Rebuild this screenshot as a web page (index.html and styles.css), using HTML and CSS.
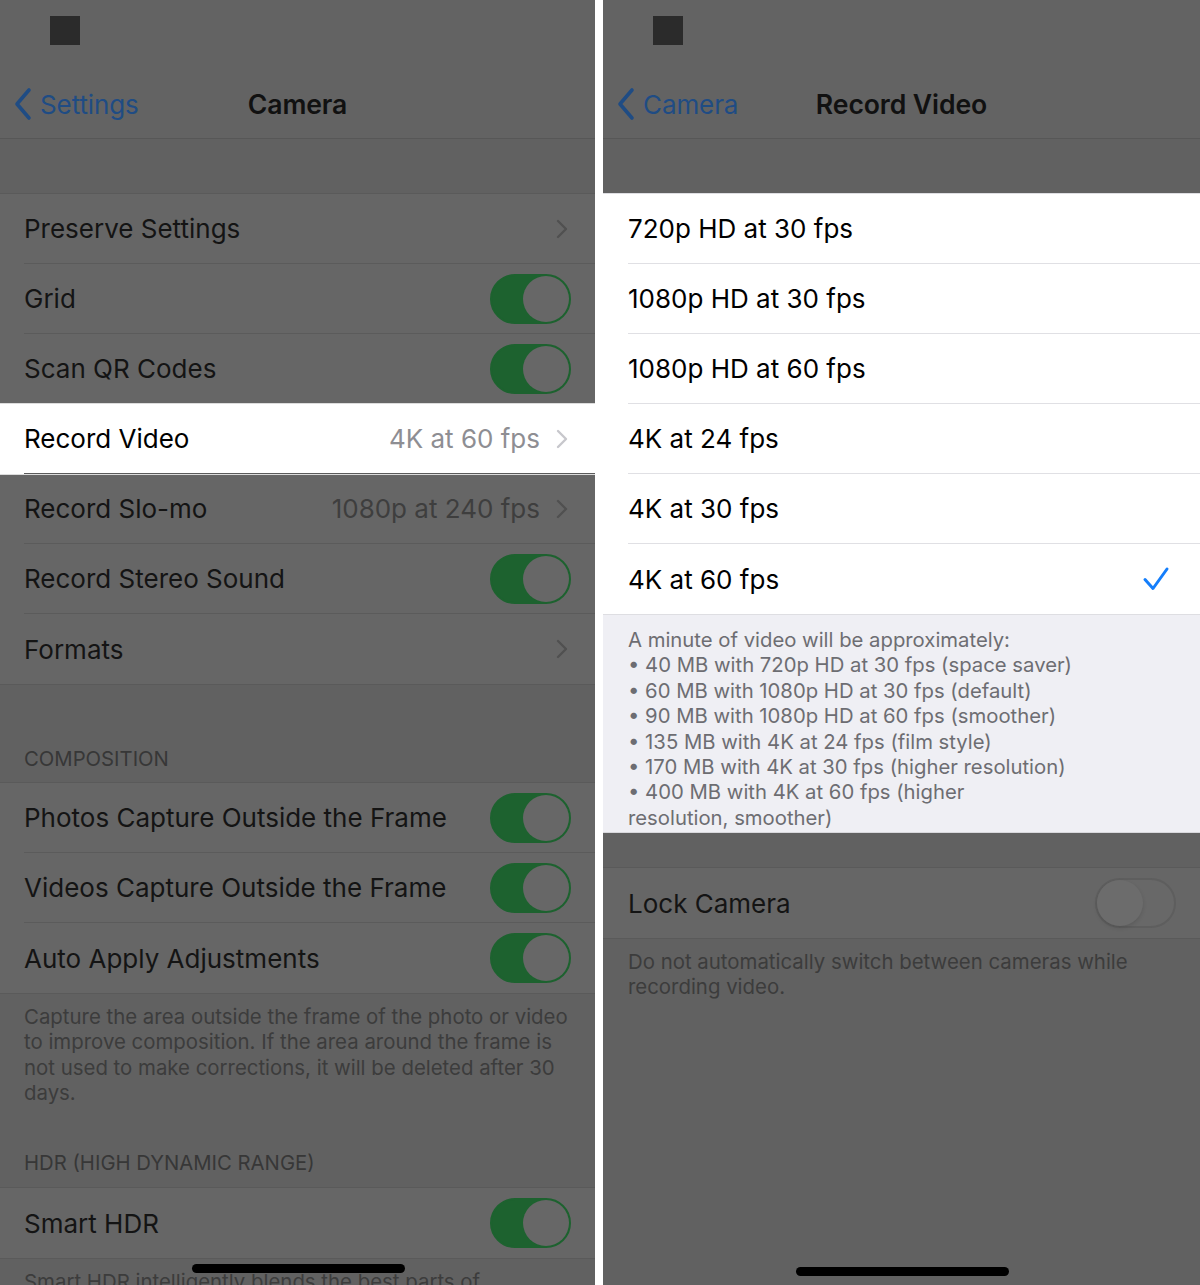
FILE: index.html
```html
<!DOCTYPE html>
<html lang="en">
<head>
  <meta charset="UTF-8">
  <meta name="viewport" content="width=device-width, initial-scale=1.0">
  <title>Camera - Record Video</title>
  <link rel="stylesheet" href="styles.css">
</head>
<body>

  <div class="screens">

    <!-- Camera settings, dimmed except the Record Video row -->
    <section class="screen">
      <div class="status-bar"><span class="status-square"></span></div>

      <div class="navbar">
        <a class="back" href="#">
          <svg class="back-icon" viewBox="0 0 20 34"><path d="M16 3L4 17l12 14"/></svg>
          Settings
        </a>
        <h1>Camera</h1>
      </div>

      <div class="spacer"></div>

      <ul class="group">
        <li class="row">
          <div class="row-inner">
            <span class="label">Preserve Settings</span>
            <svg class="chevron" viewBox="0 0 12 20"><path d="M2 2l8 8-8 8"/></svg>
          </div>
        </li>
        <li class="row">
          <div class="row-inner">
            <span class="label">Grid</span>
            <span class="toggle on"></span>
          </div>
        </li>
        <li class="row">
          <div class="row-inner">
            <span class="label">Scan QR Codes</span>
            <span class="toggle on"></span>
          </div>
        </li>
        <li class="row highlight">
          <div class="row-inner">
            <span class="label">Record Video</span>
            <span class="value">4K at 60 fps</span>
            <svg class="chevron" viewBox="0 0 12 20"><path d="M2 2l8 8-8 8"/></svg>
          </div>
        </li>
        <li class="row">
          <div class="row-inner">
            <span class="label">Record Slo-mo</span>
            <span class="value">1080p at 240 fps</span>
            <svg class="chevron" viewBox="0 0 12 20"><path d="M2 2l8 8-8 8"/></svg>
          </div>
        </li>
        <li class="row">
          <div class="row-inner">
            <span class="label">Record Stereo Sound</span>
            <span class="toggle on"></span>
          </div>
        </li>
        <li class="row">
          <div class="row-inner">
            <span class="label">Formats</span>
            <svg class="chevron" viewBox="0 0 12 20"><path d="M2 2l8 8-8 8"/></svg>
          </div>
        </li>
      </ul>

      <div class="section-header tall">COMPOSITION</div>

      <ul class="group">
        <li class="row">
          <div class="row-inner">
            <span class="label">Photos Capture Outside the Frame</span>
            <span class="toggle on"></span>
          </div>
        </li>
        <li class="row">
          <div class="row-inner">
            <span class="label">Videos Capture Outside the Frame</span>
            <span class="toggle on"></span>
          </div>
        </li>
        <li class="row">
          <div class="row-inner">
            <span class="label">Auto Apply Adjustments</span>
            <span class="toggle on"></span>
          </div>
        </li>
      </ul>

      <p class="footer">Capture the area outside the frame of the photo or video<br>to improve composition. If the area around the frame is<br>not used to make corrections, it will be deleted after 30<br>days.</p>

      <div class="section-header">HDR (HIGH DYNAMIC RANGE)</div>

      <ul class="group">
        <li class="row">
          <div class="row-inner">
            <span class="label">Smart HDR</span>
            <span class="toggle on"></span>
          </div>
        </li>
      </ul>

      <p class="footer">Smart HDR intelligently blends the best parts of</p>

      <span class="home-indicator"></span>
    </section>

    <!-- Record Video options, list and note highlighted -->
    <section class="screen">
      <div class="status-bar"><span class="status-square"></span></div>

      <div class="navbar">
        <a class="back" href="#">
          <svg class="back-icon" viewBox="0 0 20 34"><path d="M16 3L4 17l12 14"/></svg>
          Camera
        </a>
        <h1>Record Video</h1>
      </div>

      <div class="spacer"></div>

      <ul class="group light" id="formatList"></ul>

      <div class="light-footer">
        A minute of video will be approximately:<br>
        • 40 MB with 720p HD at 30 fps (space saver)<br>
        • 60 MB with 1080p HD at 30 fps (default)<br>
        • 90 MB with 1080p HD at 60 fps (smoother)<br>
        • 135 MB with 4K at 24 fps (film style)<br>
        • 170 MB with 4K at 30 fps (higher resolution)<br>
        • 400 MB with 4K at 60 fps (higher<br>
        resolution, smoother)
      </div>

      <div class="spacer short"></div>

      <ul class="group">
        <li class="row">
          <div class="row-inner">
            <span class="label">Lock Camera</span>
            <span class="toggle"></span>
          </div>
        </li>
      </ul>

      <p class="footer">Do not automatically switch between cameras while<br>recording video.</p>

      <span class="home-indicator"></span>
    </section>

  </div>

  <script>
    const formats = ['720p HD at 30 fps', '1080p HD at 30 fps', '1080p HD at 60 fps', '4K at 24 fps', '4K at 30 fps', '4K at 60 fps'];
    const selected = '4K at 60 fps';
    const formatList = document.getElementById('formatList');

    formats.forEach(name => {
      const item = document.createElement('li');
      item.classList.add('row');
      const check = name === selected
        ? '<svg class="check" viewBox="0 0 28 26"><path d="M3 13.5l8 9L25 3"/></svg>'
        : '';
      item.innerHTML = `<div class="row-inner"><span class="label">${name}</span>${check}</div>`;
      formatList.appendChild(item);
    });
  </script>
</body>
</html>
```

FILE: styles.css
```css
/* General Styles */
* {
  margin: 0;
  padding: 0;
  box-sizing: border-box;
}

body {
  font-family: 'Inter', 'Liberation Sans', sans-serif;
  background-color: #ffffff;
  color: #141414;
  width: 1200px;
  height: 1285px;
  overflow: hidden;
}

.screens {
  display: flex;
  gap: 8px;
  height: 1285px;
}

.screen {
  position: relative;
  flex: 0 0 595px;
  height: 100%;
  background-color: #616161;
  overflow: hidden;
}

.screen + .screen {
  flex-basis: 597px;
}

/* Status + navbar */
.status-bar {
  height: 70px;
  padding: 16px 0 0 50px;
  background-color: #636363;
}

.status-square {
  display: block;
  width: 30px;
  height: 29px;
  background-color: #2b2b2b;
}

.navbar {
  display: grid;
  grid-template-columns: 1fr auto 1fr;
  align-items: center;
  height: 69px;
  background-color: #636363;
  border-bottom: 1px solid #575757;
}

.back {
  display: flex;
  align-items: center;
  gap: 7px;
  padding-left: 13px;
  font-size: 26px;
  color: #1f4c84;
  text-decoration: none;
  letter-spacing: -0.1px;
}

.back-icon {
  width: 20px;
  height: 34px;
  fill: none;
  stroke: #1f4c84;
  stroke-width: 3.6;
  stroke-linecap: round;
  stroke-linejoin: round;
}

h1 {
  font-size: 26.6px;
  font-weight: 600;
  color: #111111;
  letter-spacing: -0.1px;
}

.spacer {
  height: 54px;
}

.spacer.short {
  height: 34px;
}

/* Grouped lists */
.group {
  list-style: none;
  background-color: #666666;
  border-top: 1px solid #5a5a5a;
  border-bottom: 1px solid #5a5a5a;
}

.row {
  height: 70px;
  padding-left: 24px;
}

.screen + .screen .row {
  padding-left: 25px;
}

.row-inner {
  display: flex;
  align-items: center;
  height: 100%;
  padding-right: 24px;
  border-bottom: 1px solid #5b5b5b;
}

.row:last-child .row-inner {
  border-bottom: none;
}

.label {
  flex: 1;
  font-size: 26px;
  color: #141414;
}

.value {
  font-size: 26px;
  color: #3e3e3e;
  margin-right: 16px;
}

.chevron {
  width: 12px;
  height: 20px;
  margin-right: 3px;
  fill: none;
  stroke: #505050;
  stroke-width: 2.4;
  stroke-linecap: round;
  stroke-linejoin: round;
}

.row.highlight {
  background-color: #ffffff;
  box-shadow: 0 -1px 0 #dcdcdc, 0 1px 0 #dcdcdc;
  position: relative;
}

.row.highlight .label {
  color: #000000;
}

.row.highlight .value {
  color: #8e8e93;
}

.row.highlight .chevron {
  stroke: #c7c7cc;
}

/* Toggles */
.toggle {
  position: relative;
  width: 81px;
  height: 50px;
  border-radius: 25px;
  background-color: #686868;
  border: 2px solid #5e5e5e;
}

.toggle::after {
  content: '';
  position: absolute;
  top: 0;
  left: 0;
  width: 46px;
  height: 46px;
  border-radius: 50%;
  background-color: #6c6c6c;
  box-shadow: 0 2px 4px rgba(0, 0, 0, 0.12);
}

.toggle.on {
  background-color: #1d622f;
  border-color: #1d622f;
}

.toggle.on::after {
  left: auto;
  right: 0;
  background-color: #676767;
  box-shadow: none;
}

/* Headers and footers */
.section-header {
  display: flex;
  align-items: flex-end;
  height: 82px;
  padding: 0 24px 13px;
  font-size: 20.3px;
  color: #373737;
  line-height: 22px;
}

.section-header.tall {
  height: 97px;
  padding-bottom: 12px;
}

.footer {
  padding: 10px 24px 0;
  font-size: 20.4px;
  line-height: 25.3px;
  color: #3c3c3c;
}

.screen + .screen .footer {
  padding-left: 25px;
}

/* Highlighted Record Video list */
.group.light {
  background-color: #ffffff;
  border-top: 1px solid #dedee2;
  border-bottom: 1px solid #dedee2;
}

.group.light .row-inner {
  border-bottom-color: #e0e0e4;
  padding-right: 30px;
}

.group.light .label {
  color: #000000;
}

.check {
  width: 28px;
  height: 26px;
  fill: none;
  stroke: #147efb;
  stroke-width: 3;
  stroke-linecap: round;
  stroke-linejoin: round;
}

.light-footer {
  height: 218px;
  padding: 12px 25px 0;
  background-color: #efeff4;
  border-bottom: 1px solid #d8d8dc;
  font-size: 20.3px;
  line-height: 25.4px;
  color: #6d6d72;
}

.home-indicator {
  position: absolute;
  left: 50%;
  bottom: 12px;
  width: 213px;
  height: 9px;
  margin-left: -106px;
  border-radius: 5px;
  background-color: #000000;
}

.screen + .screen .home-indicator {
  bottom: 9px;
}
```
